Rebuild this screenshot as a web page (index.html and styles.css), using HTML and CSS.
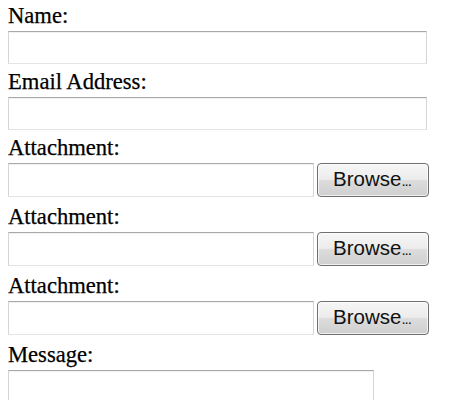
FILE: index.html
```html
<!DOCTYPE html>
<html>
<head>
    <title>Contact</title>
    <link rel="stylesheet" href="styles.css">
</head>
<body>
    <form class="contact-form">
        <label for="name">Name:</label>
        <input type="text" id="name" class="text-field">

        <label for="email">Email Address:</label>
        <input type="text" id="email" class="text-field">

        <label>Attachment:</label>
        <div class="file-row">
            <input type="text" class="file-path" readonly>
            <button type="button" class="browse-btn">Browse<span class="dots">...</span></button>
        </div>

        <label>Attachment:</label>
        <div class="file-row">
            <input type="text" class="file-path" readonly>
            <button type="button" class="browse-btn">Browse<span class="dots">...</span></button>
        </div>

        <label>Attachment:</label>
        <div class="file-row">
            <input type="text" class="file-path" readonly>
            <button type="button" class="browse-btn">Browse<span class="dots">...</span></button>
        </div>

        <label for="message">Message:</label>
        <textarea id="message" class="message-box"></textarea>
    </form>
</body>
</html>
```

FILE: styles.css
```css
body { margin: 2px 8px 0; background: #fff; color: #000; font-family: "Liberation Serif", "Times New Roman", serif; }

.contact-form label {
    display: block;
    font-size: 22.6px;
    line-height: 28px;
    margin-bottom: 1px;
    -webkit-text-stroke: 0.25px #000;
}

/* classic sunken field: darker top edge, pale sides */
.text-field, .file-path, .message-box {
    display: block;
    box-sizing: border-box;
    margin: 0;
    padding: 2px 4px;
    background: #fff;
    border: 1px solid #d6d6d6;
    border-top-color: #a8a8a8;
    border-bottom-color: #e4e4e4;
    box-shadow: inset 0 1px 1px rgba(0, 0, 0, 0.06);
    font-family: "Liberation Sans", Arial, sans-serif;
    font-size: 16px;
    outline: none;
}

.text-field {
    width: 419px;
    height: 33px;
    margin-bottom: 4px;
}

.file-row {
    display: flex;
    gap: 3px;
    margin-bottom: 6px;
}

.file-path {
    width: 306px;
    height: 34px;
}

.browse-btn {
    box-sizing: border-box;
    width: 112px;
    height: 34px;
    padding: 0 2px 1px 0;
    border: 1px solid #6f6f6f;
    border-radius: 4px;
    background: linear-gradient(to bottom, #f6f6f6 0%, #ececec 48%, #dcdcdc 52%, #cfcfcf 100%);
    box-shadow: inset 0 0 0 1px rgba(255, 255, 255, 0.7);
    color: #111;
    font-family: "Liberation Sans", Arial, sans-serif;
    font-size: 20.5px;
    line-height: 30px;
    white-space: nowrap;
}

/* squeezed ellipsis after the label */
.browse-btn .dots {
    font-size: 15px;
    letter-spacing: -1px;
}

.message-box {
    width: 366px;
    height: 60px;
    resize: none;
}
```
